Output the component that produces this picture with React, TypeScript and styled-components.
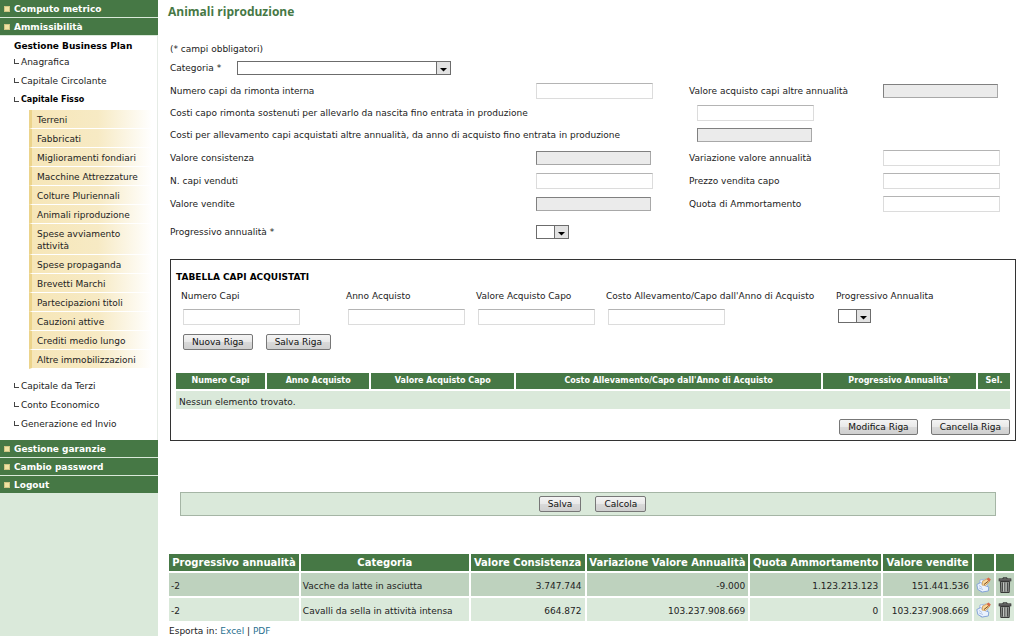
import React from "react";
import styled, { createGlobalStyle, css } from "styled-components";

const GlobalStyle = createGlobalStyle`
  *, *::before, *::after { box-sizing: border-box; }
  body {
    margin: 0;
    background: #fff;
    color: #222;
    font-family: "DejaVu Sans", Verdana, sans-serif;
    font-size: 9px;
    line-height: 12px;
  }
  a { color: inherit; text-decoration: none; }
  ul { list-style: none; margin: 0; padding: 0; }
`;

const green = "#467845";
const paleGreen = "#dae9da";

const Page = styled.div`
  display: flex;
  min-height: 100vh;
`;

const Sidebar = styled.nav`
  flex: 0 0 158px;
  background: ${paleGreen};
`;

const MainLink = styled.a`
  display: flex;
  align-items: center;
  gap: 4px;
  height: 18px;
  padding-left: 4px;
  border-bottom: 1px solid ${paleGreen};
  background: ${green};
  color: #fff;
  font-weight: bold;
  &::before {
    content: "";
    width: 6px;
    height: 6px;
    background: #efe3a2;
    border: 1px solid #cfc585;
  }
`;

const Section = styled.div`
  padding: 4px 0 7px;
  background: #fff;
  border-right: 1px solid #e6ece6;
`;

const SectionTitle = styled.h2`
  margin: 0;
  padding-left: 14px;
  font-size: 9px;
  line-height: 12px;
  color: #000;
`;

const SubLink = styled.a<{ $active?: boolean }>`
  display: flex;
  align-items: center;
  gap: 2px;
  height: 19px;
  padding-left: 14px;
  ${(p) => p.$active && css`font-size: 8px; font-weight: bold; color: #000;`}
  &::before {
    content: "";
    width: 5px;
    height: 5px;
    border: solid #444;
    border-width: 0 0 1px 1px;
  }
`;

const LeafList = styled.ul`
  margin: 1px 5px 7px 29px;
`;

const LeafLink = styled.a`
  display: block;
  padding: 4px 12px 2px 5px;
  border-left: 3px solid #ecd48c;
  border-bottom: 1px solid #fff;
  background: linear-gradient(to right, #f6e6b8 0%, #f7eac4 55%, #fff 100%);
`;

const Main = styled.main`
  flex: 1;
  min-width: 0;
  padding: 4px 8px 0 12px;
`;

const Title = styled.h1`
  margin: 0 0 23px -2px;
  color: ${green};
  font: bold 12px/16px "Open Sans", sans-serif;
`;

const Note = styled.p`
  margin: 0;
`;

const CategoryRow = styled.div`
  display: flex;
  align-items: center;
  height: 24px;
  gap: 16px;
  padding-top: 2px;
`;

const FormRow = styled.div`
  display: grid;
  grid-template-columns: 366fr 153fr 194fr 133fr;
  align-items: center;
  height: 23px;
`;

const WideRow = styled(FormRow)`
  grid-template-columns: 527fr 319fr;
  height: 22px;
`;

const YearRow = styled(FormRow)`
  margin: 5px 0 16px;
`;

const TextBox = styled.input`
  width: 117px;
  height: 16px;
  padding: 0 2px;
  border: 1px solid #dcdcdc;
  border-top-color: #b4b4b4;
  background: #fff;
  font: inherit;
  &:read-only {
    width: 115px;
    height: 14px;
    border-color: #808080 #a8a8a8 #a8a8a8 #808080;
    background: #ebebeb;
  }
`;

const SelectFrame = styled.span<{ $width: number }>`
  position: relative;
  display: inline-flex;
  width: ${(p) => p.$width}px;
  height: 14px;
`;

const SelectBox = styled.select`
  appearance: none;
  width: 100%;
  height: 100%;
  padding: 0 16px 0 2px;
  border: 1px solid #6c6c6c;
  border-radius: 0;
  background: #fff;
  font: inherit;
`;

const Arrow = styled.svg`
  position: absolute;
  top: 0;
  right: 0;
  pointer-events: none;
`;

const Panel = styled.section`
  padding: 11px 5px 5px;
  border: 1px solid #333;
`;

const PanelTitle = styled.h2`
  margin: 0;
  color: #000;
  font-size: 9px;
  line-height: 12px;
`;

const PanelFields = styled.div`
  display: grid;
  grid-template-columns: 165fr 130fr 130fr 230fr 174fr;
  padding: 7px 0 9px 5px;
`;

const Field = styled.div`
  display: flex;
  flex-direction: column;
  align-items: flex-start;
  gap: 7px;
  white-space: nowrap;
`;

const FieldControl = styled.div`
  padding-left: 2px;
  height: 16px;
`;

const Actions = styled.div<{ $end?: boolean }>`
  display: flex;
  gap: 13px;
  padding-left: 7px;
  ${(p) => p.$end && css`justify-content: flex-end; padding-top: 10px;`}
`;

const Button = styled.button`
  height: 16px;
  padding: 0 8px;
  border: 1px solid #777;
  border-radius: 2px;
  background: linear-gradient(#f4f4f4, #e9e9e9 48%, #d9d9d9 52%, #cfcfcf);
  color: #111;
  font: inherit;
  line-height: 12px;
  white-space: nowrap;
`;

const Table = styled.table`
  width: 100%;
  table-layout: fixed;
  border-collapse: separate;
  border-spacing: 0;
`;

const Th = styled.th`
  padding: 0;
  border-right: 2px solid #fff;
  border-bottom: 2px solid #fff;
  background: ${green};
  color: #fff;
  white-space: nowrap;
  &:last-child { border-right: 0; }
`;

const PurchaseTable = styled(Table)`
  margin-top: 23px;
  ${Th} { height: 18px; font-size: 8px; }
`;

const EmptyCell = styled.td`
  height: 18px;
  padding: 3px 3px 0;
  background: ${paleGreen};
`;

const SaveBar = styled.div`
  display: flex;
  justify-content: center;
  gap: 14px;
  margin: 51px 20px 38px 10px;
  padding: 3px 3px 3px 12px;
  border: 1px solid #a5b5a5;
  background: ${paleGreen};
`;

const Results = styled.div`
  margin: 0 2px 0 -1px;
`;

const ResultsTable = styled(Table)`
  ${Th} { height: 19px; font-size: 10px; }
`;

const Row = styled.tr`
  background: ${paleGreen};
  &:nth-child(odd) { background: #bed2be; }
`;

const Td = styled.td<{ $numeric?: boolean }>`
  height: 24px;
  padding: 3px 3px 0 2px;
  border-right: 2px solid #fff;
  border-bottom: 2px solid #fff;
  text-align: ${(p) => (p.$numeric ? "right" : "left")};
  white-space: nowrap;
  &:last-child { border-right: 0; }
`;

const IconCell = styled(Td)`
  padding: 4px 0 0 2px;
`;

const IconButton = styled.button`
  display: block;
  padding: 0;
  border: 0;
  background: none;
`;

const ExportLine = styled.p`
  margin: 2px 0 0;
  a { color: #2a6f8f; }
`;

function Select({ id, width, label }: { id: string; width: number; label?: string }) {
  return (
    <SelectFrame $width={width}>
      <SelectBox id={id} aria-label={label}>
        <option value="" />
      </SelectBox>
      <Arrow width="15" height="14" viewBox="0 0 15 14" aria-hidden="true">
        <rect x="0.5" y="0.5" width="14" height="13" fill="#e2e2e2" stroke="#6c6c6c" />
        <path d="M4 7h7L7.500 10.500z" fill="#000" />
      </Arrow>
    </SelectFrame>
  );
}

function EditIcon() {
  return (
    <svg width="16" height="16" viewBox="0 0 16 16" aria-hidden="true">
      <path d="M4 3l6-1 2 3-1 9-6 1-2-4z" fill="#f4f8ff" stroke="#94aedb" strokeWidth="0.8" />
      <path d="M.8 7.500l4-2 4 3 4 1.500-.5 4-6 1-4.500-2.500z" fill="#e9f1fd" stroke="#7f9fd6" strokeWidth="0.900" />
      <path d="M3 8.500l3 2M3 11l4 1.500M6 4h3" stroke="#a4bbe2" strokeWidth="0.8" />
      <path d="M6 8l.8-4 4-2 2.700 2.500L9.500 8.500z" fill="#f9d79c" stroke="#d09a50" strokeWidth="0.8" />
      <path d="M10.500 2l2-1.500 2.300 2-1.300 1.900z" fill="#d9694a" />
      <path d="M8 7.500l4.500-3.500" stroke="#7a4a1c" strokeWidth="1" />
    </svg>
  );
}

function TrashIcon() {
  return (
    <svg width="14" height="16" viewBox="0 0 14 16" aria-hidden="true">
      <path d="M5 2V.8h4V2" fill="none" stroke="#333" />
      <rect x="1" y="1.800" width="12" height="2.200" fill="#666" stroke="#2b2b2b" strokeWidth="0.600" />
      <path d="M2.400 4.500h9.200l-.4 11H2.800z" fill="#8b8f8b" stroke="#2b2b2b" strokeWidth="0.900" />
      <path d="M4.500 5.500v9M7 5.500v9M9.500 5.500v9" stroke="#444" strokeWidth="0.900" />
      <path d="M5.500 5.500v9M8 5.500v9" stroke="#d2d5d2" strokeWidth="0.800" />
    </svg>
  );
}

const leaves = [
  "Terreni", "Fabbricati", "Miglioramenti fondiari", "Macchine Attrezzature",
  "Colture Pluriennali", "Animali riproduzione", "Spese avviamento attività",
  "Spese propaganda", "Brevetti Marchi", "Partecipazioni titoli",
  "Cauzioni attive", "Crediti medio lungo", "Altre immobilizzazioni",
];

const purchaseColumns: [string, number][] = [
  ["Numero Capi", 91], ["Anno Acquisto", 104], ["Valore Acquisto Capo", 145],
  ["Costo Allevamento/Capo dall'Anno di Acquisto", 306],
  ["Progressivo Annualita'", 155], ["Sel.", 32],
];

const resultColumns: [string, number][] = [
  ["Progressivo annualità", 132], ["Categoria", 170], ["Valore Consistenza", 116],
  ["Variazione Valore Annualità", 164], ["Quota Ammortamento", 133],
  ["Valore vendite", 91], ["", 22], ["", 18],
];

const results = [
  ["-2", "Vacche da latte in asciutta", "3.747.744", "-9.000", "1.123.213.123", "151.441.536"],
  ["-2", "Cavalli da sella in attività intensa", "664.872", "103.237.908.669", "0", "103.237.908.669"],
];

function Columns({ columns }: { columns: [string, number][] }) {
  const total = columns.reduce((sum, c) => sum + c[1], 0);
  return (
    <>
      <colgroup>
        {columns.map((c, i) => <col key={i} style={{ width: `${(c[1] / total) * 100}%` }} />)}
      </colgroup>
      <thead>
        <tr>{columns.map((c, i) => <Th key={i} scope="col">{c[0]}</Th>)}</tr>
      </thead>
    </>
  );
}

function PairRow({ items }: { items: { id: string; label: string; locked?: boolean }[] }) {
  return (
    <FormRow>
      {items.map((f) => (
        <React.Fragment key={f.id}>
          <label htmlFor={f.id}>{f.label}</label>
          <TextBox id={f.id} readOnly={f.locked} />
        </React.Fragment>
      ))}
    </FormRow>
  );
}

export default function App() {
  return (
    <Page>
      <GlobalStyle />
      <Sidebar>
        <MainLink href="#computo">Computo metrico</MainLink>
        <MainLink href="#ammissibilita">Ammissibilità</MainLink>
        <Section>
          <SectionTitle>Gestione Business Plan</SectionTitle>
          <SubLink href="#anagrafica">Anagrafica</SubLink>
          <SubLink href="#circolante">Capitale Circolante</SubLink>
          <SubLink href="#fisso" $active>Capitale Fisso</SubLink>
          <LeafList>
            {leaves.map((l) => <li key={l}><LeafLink href="#voce">{l}</LeafLink></li>)}
          </LeafList>
          <SubLink href="#terzi">Capitale da Terzi</SubLink>
          <SubLink href="#conto">Conto Economico</SubLink>
          <SubLink href="#invio">Generazione ed Invio</SubLink>
        </Section>
        <MainLink href="#garanzie">Gestione garanzie</MainLink>
        <MainLink href="#password">Cambio password</MainLink>
        <MainLink href="#logout">Logout</MainLink>
      </Sidebar>
      <Main>
        <Title>Animali riproduzione</Title>
        <Note>(* campi obbligatori)</Note>
        <CategoryRow>
          <label htmlFor="categoria">Categoria *</label>
          <Select id="categoria" width={214} />
        </CategoryRow>
        <PairRow items={[
          { id: "rimonta", label: "Numero capi da rimonta interna" },
          { id: "acquisto-altre", label: "Valore acquisto capi altre annualità", locked: true },
        ]} />
        <WideRow>
          <label htmlFor="costi-rimonta">Costi capo rimonta sostenuti per allevarlo da nascita fino entrata in produzione</label>
          <TextBox id="costi-rimonta" />
        </WideRow>
        <WideRow>
          <label htmlFor="costi-allevamento">Costi per allevamento capi acquistati altre annualità, da anno di acquisto fino entrata in produzione</label>
          <TextBox id="costi-allevamento" readOnly />
        </WideRow>
        <PairRow items={[
          { id: "consistenza", label: "Valore consistenza", locked: true },
          { id: "variazione", label: "Variazione valore annualità" },
        ]} />
        <PairRow items={[
          { id: "venduti", label: "N. capi venduti" },
          { id: "prezzo", label: "Prezzo vendita capo" },
        ]} />
        <PairRow items={[
          { id: "vendite", label: "Valore vendite", locked: true },
          { id: "quota", label: "Quota di Ammortamento" },
        ]} />
        <YearRow>
          <label htmlFor="annualita">Progressivo annualità *</label>
          <Select id="annualita" width={33} />
        </YearRow>
        <Panel>
          <PanelTitle>TABELLA CAPI ACQUISTATI</PanelTitle>
          <PanelFields>
            {["Numero Capi", "Anno Acquisto", "Valore Acquisto Capo", "Costo Allevamento/Capo dall'Anno di Acquisto"].map((l, i) => (
              <Field key={l}>
                <label htmlFor={`capi-${i}`}>{l}</label>
                <FieldControl><TextBox id={`capi-${i}`} /></FieldControl>
              </Field>
            ))}
            <Field>
              <label htmlFor="capi-anno">Progressivo Annualita</label>
              <FieldControl><Select id="capi-anno" width={33} /></FieldControl>
            </Field>
          </PanelFields>
          <Actions>
            <Button type="button">Nuova Riga</Button>
            <Button type="button">Salva Riga</Button>
          </Actions>
          <PurchaseTable>
            <Columns columns={purchaseColumns} />
            <tbody>
              <tr><EmptyCell colSpan={6}>Nessun elemento trovato.</EmptyCell></tr>
            </tbody>
          </PurchaseTable>
          <Actions $end>
            <Button type="button">Modifica Riga</Button>
            <Button type="button">Cancella Riga</Button>
          </Actions>
        </Panel>
        <SaveBar>
          <Button type="button">Salva</Button>
          <Button type="button">Calcola</Button>
        </SaveBar>
        <Results>
          <ResultsTable>
            <Columns columns={resultColumns} />
            <tbody>
              {results.map((r) => (
                <Row key={r[1]}>
                  {r.map((v, i) => <Td key={i} $numeric={i > 1}>{v}</Td>)}
                  <IconCell><IconButton type="button" aria-label="Modifica"><EditIcon /></IconButton></IconCell>
                  <IconCell><IconButton type="button" aria-label="Elimina"><TrashIcon /></IconButton></IconCell>
                </Row>
              ))}
            </tbody>
          </ResultsTable>
          <ExportLine>Esporta in: <a href="#excel">Excel</a> | <a href="#pdf">PDF</a></ExportLine>
        </Results>
      </Main>
    </Page>
  );
}
